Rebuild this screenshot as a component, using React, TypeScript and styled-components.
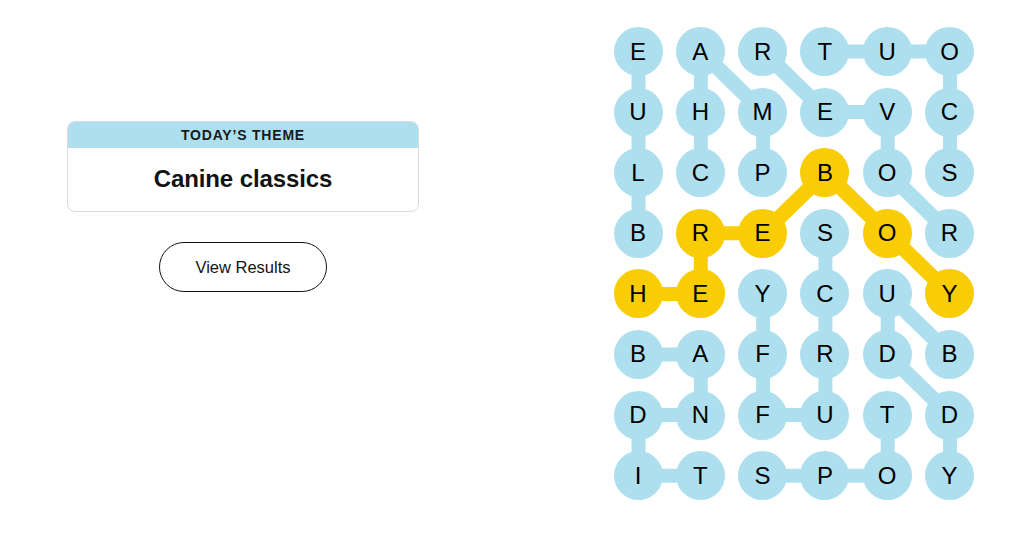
import React from 'react';
import styled, { createGlobalStyle } from 'styled-components';

const BLUE = '#aedfee';
const GOLD = '#f8cd05';

const COLS = 6;
const CELL = 49;
const COL_PITCH = 62.3;
const ROW_PITCH = 60.6;

const LETTERS = [
  'EARTUO',
  'UHMEVC',
  'LCPBOS',
  'BRESOR',
  'HEYCUY',
  'BAFRDB',
  'DNFUTD',
  'ITSPOY',
];

// found words as [row, col] paths
const WORDS: Array<{ path: Array<[number, number]>; spangram?: boolean }> = [
  { path: [[3, 0], [2, 0], [1, 0], [0, 0]] }, // BLUE
  { path: [[2, 1], [1, 1], [0, 1], [1, 2], [2, 2]] }, // CHAMP
  { path: [[3, 5], [2, 4], [1, 4], [1, 3], [0, 2]] }, // ROVER
  { path: [[2, 5], [1, 5], [0, 5], [0, 4], [0, 3]] }, // SCOUT
  { path: [[3, 3], [4, 3], [5, 3], [6, 3], [6, 2], [5, 2], [4, 2]] }, // SCRUFFY
  { path: [[5, 0], [5, 1], [6, 1], [6, 0], [7, 0], [7, 1]] }, // BANDIT
  { path: [[5, 5], [4, 4], [5, 4], [6, 5], [7, 5]] }, // BUDDY
  { path: [[7, 2], [7, 3], [7, 4], [6, 4]] }, // SPOT
  { path: [[4, 0], [4, 1], [3, 1], [3, 2], [2, 3], [3, 4], [4, 5]], spangram: true }, // HEREBOY
];

const spangramCells = new Set(
  WORDS.filter((w) => w.spangram).flatMap((w) => w.path.map(([r, c]) => `${r}-${c}`))
);

const center = (r: number, c: number) => ({
  x: CELL / 2 + c * COL_PITCH,
  y: CELL / 2 + r * ROW_PITCH,
});

const GlobalStyle = createGlobalStyle`
  html, body {
    margin: 0;
    padding: 0;
    background: #ffffff;
  }
  body {
    font-family: "Liberation Sans", Arial, sans-serif;
    color: #121212;
  }
`;

function Board() {
  const width = CELL + (COLS - 1) * COL_PITCH;
  const height = CELL + (LETTERS.length - 1) * ROW_PITCH;
  return (
    <BoardGrid>
      <Links width={width} height={height} viewBox={`0 0 ${width} ${height}`}>
        {WORDS.map((word, i) =>
          word.path.slice(1).map(([r, c], j) => {
            const [pr, pc] = word.path[j];
            const a = center(pr, pc);
            const b = center(r, c);
            const diagonal = pr !== r && pc !== c;
            return (
              <line
                key={`${i}-${j}`}
                x1={a.x}
                y1={a.y}
                x2={b.x}
                y2={b.y}
                stroke={word.spangram ? GOLD : BLUE}
                strokeWidth={diagonal ? 15 : 14}
              />
            );
          })
        )}
      </Links>
      {LETTERS.map((row, r) =>
        row.split('').map((ch, c) => (
          <Cell key={`${r}-${c}`} $gold={spangramCells.has(`${r}-${c}`)}>
            {ch}
          </Cell>
        ))
      )}
    </BoardGrid>
  );
}

export default function App() {
  return (
    <>
      <GlobalStyle />
      <Page>
        <SidePane>
          <ThemeCard>
            <ThemeLabel>Today’s Theme</ThemeLabel>
            <ThemeTitle>Canine classics</ThemeTitle>
          </ThemeCard>
          <ResultsButton>View Results</ResultsButton>
        </SidePane>
        <Board />
      </Page>
    </>
  );
}

const Page = styled.div`
  display: flex;
  flex-direction: row;
  align-items: flex-start;
  gap: 194px;
  width: 1024px;
  height: 538px;
  box-sizing: border-box;
  padding: 27px 0 0 67px;
`;

const SidePane = styled.div`
  display: flex;
  flex-direction: column;
  align-items: center;
  gap: 30px;
  width: 352px;
  padding-top: 94px;
`;

const ThemeCard = styled.div`
  width: 100%;
  border: 1px solid #dcdcdc;
  border-radius: 8px;
  overflow: hidden;
  box-sizing: border-box;
`;

const ThemeLabel = styled.div`
  background: ${BLUE};
  height: 26px;
  display: flex;
  align-items: center;
  justify-content: center;
  text-transform: uppercase;
  font-size: 14px;
  font-weight: 700;
  letter-spacing: 0.8px;
  color: #1a1a1a;
`;

const ThemeTitle = styled.div`
  height: 63px;
  display: flex;
  align-items: center;
  justify-content: center;
  padding-bottom: 2px;
  box-sizing: border-box;
  font-size: 24px;
  font-weight: 700;
  letter-spacing: -0.1px;
  color: #121212;
`;

const ResultsButton = styled.button`
  width: 168px;
  height: 50px;
  border: 1px solid #121212;
  border-radius: 999px;
  background: #ffffff;
  font-family: "Liberation Sans", Arial, sans-serif;
  font-size: 16.5px;
  color: #121212;
  cursor: pointer;
`;

const BoardGrid = styled.div`
  position: relative;
  display: grid;
  grid-template-columns: repeat(${COLS}, ${CELL}px);
  grid-auto-rows: ${CELL}px;
  column-gap: ${COL_PITCH - CELL}px;
  row-gap: ${ROW_PITCH - CELL}px;
  margin-left: 0.5px;
`;

const Links = styled.svg`
  position: absolute;
  left: 0;
  top: 0;
`;

const Cell = styled.div<{ $gold: boolean }>`
  position: relative;
  display: flex;
  align-items: center;
  justify-content: center;
  width: ${CELL}px;
  height: ${CELL}px;
  border-radius: 50%;
  background: ${(p) => (p.$gold ? GOLD : BLUE)};
  font-size: 24px;
  color: #000000;
  user-select: none;
`;
